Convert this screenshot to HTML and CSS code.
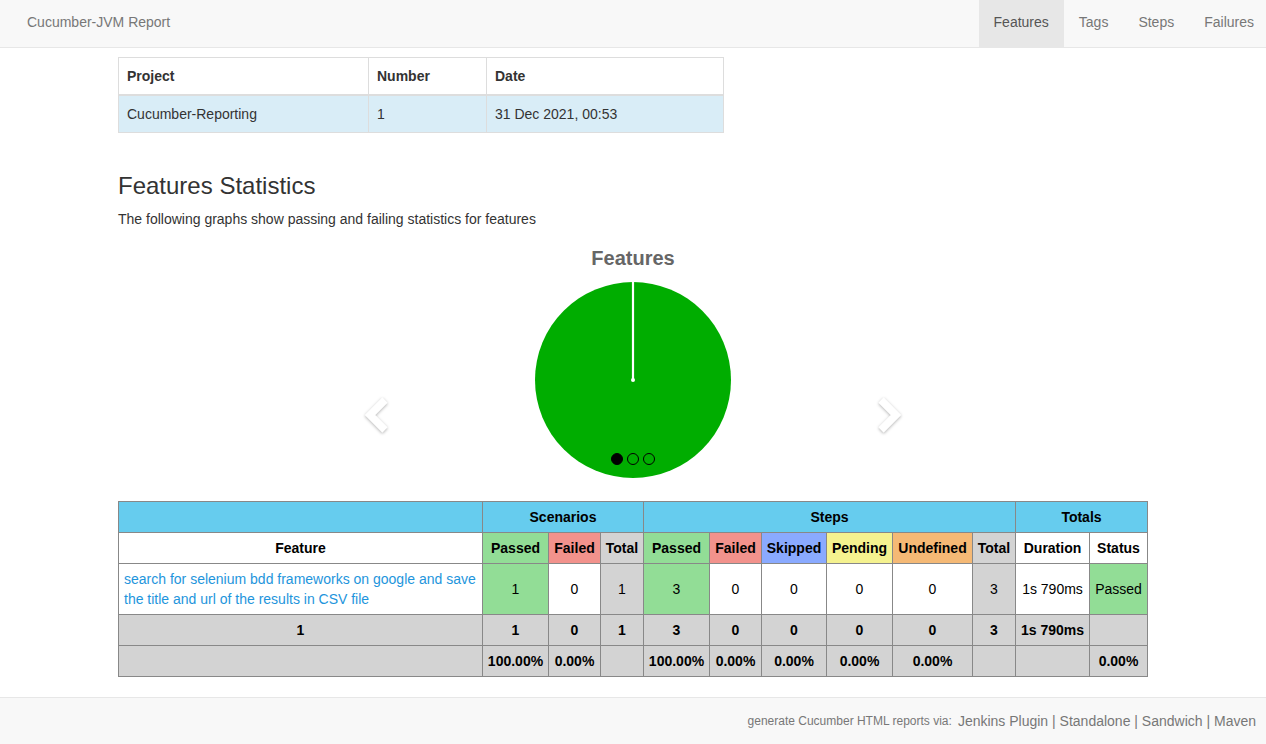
FILE: index.html
```html
<!DOCTYPE html>
<html>
<head>
<meta charset="utf-8">
<title>Cucumber-JVM Report</title>
<link rel="stylesheet" href="styles.css">
</head>
<body>
<nav class="navbar">
  <a class="brand" href="#">Cucumber-JVM Report</a>
  <ul class="nav">
    <li class="active"><a href="#">Features</a></li>
    <li><a href="#">Tags</a></li>
    <li><a href="#">Steps</a></li>
    <li class="last"><a href="#">Failures</a></li>
  </ul>
</nav>

<main class="container">
  <table class="info">
    <colgroup><col class="c-project"><col class="c-number"><col class="c-date"></colgroup>
    <thead>
      <tr><th>Project</th><th>Number</th><th>Date</th></tr>
    </thead>
    <tbody>
      <tr class="info-row"><td>Cucumber-Reporting</td><td>1</td><td>31 Dec 2021, 00:53</td></tr>
    </tbody>
  </table>

  <h2 class="title">Features Statistics</h2>
  <p class="lead">The following graphs show passing and failing statistics for features</p>

  <section class="carousel">
    <div class="chart-title">Features</div>
    <div class="pie-wrap">
      <svg class="pie" width="198" height="198" viewBox="0 0 198 198">
        <circle cx="99" cy="99" r="98" fill="#00ad00"/>
        <line x1="99" y1="0" x2="99" y2="99" stroke="#ffffff" stroke-width="2.2"/>
        <circle cx="99" cy="99" r="2" fill="#ffffff"/>
      </svg>
      <div class="indicators">
        <span class="dot on"></span><span class="dot"></span><span class="dot"></span>
      </div>
    </div>
    <a class="ctrl left" href="#">
      <svg width="30" height="44" viewBox="0 0 30 44"><polyline points="23,6 8,21 23,36" fill="none" stroke="#ffffff" stroke-width="7.5" stroke-linejoin="miter" stroke-linecap="butt"/></svg>
    </a>
    <a class="ctrl right" href="#">
      <svg width="30" height="44" viewBox="0 0 30 44"><polyline points="7,6 22,21 7,36" fill="none" stroke="#ffffff" stroke-width="7.5" stroke-linejoin="miter" stroke-linecap="butt"/></svg>
    </a>
  </section>

  <table class="stats">
    <colgroup>
      <col class="w364"><col class="w66"><col class="w52"><col class="w43">
      <col class="w66"><col class="w52"><col class="w65"><col class="w66"><col class="w80"><col class="w43">
      <col class="w74"><col class="w58">
    </colgroup>
    <thead>
      <tr class="group">
        <th></th>
        <th colspan="3">Scenarios</th>
        <th colspan="6">Steps</th>
        <th colspan="2">Totals</th>
      </tr>
      <tr class="head">
        <th class="white">Feature</th>
        <th class="passed">Passed</th><th class="failed">Failed</th><th class="total">Total</th>
        <th class="passed">Passed</th><th class="failed">Failed</th><th class="skipped">Skipped</th><th class="pending">Pending</th><th class="undefined">Undefined</th><th class="total">Total</th>
        <th class="white">Duration</th><th class="white">Status</th>
      </tr>
    </thead>
    <tbody>
      <tr class="data">
        <td class="feature"><a href="#">search for selenium bdd frameworks on google and save the title and url of the results in CSV file</a></td>
        <td class="passed">1</td><td>0</td><td class="total">1</td>
        <td class="passed">3</td><td>0</td><td>0</td><td>0</td><td>0</td><td class="total">3</td>
        <td>1s 790ms</td><td class="passed">Passed</td>
      </tr>
    </tbody>
    <tfoot>
      <tr class="sum">
        <td>1</td><td>1</td><td>0</td><td>1</td><td>3</td><td>0</td><td>0</td><td>0</td><td>0</td><td>3</td><td>1s 790ms</td><td></td>
      </tr>
      <tr class="sum">
        <td></td><td>100.00%</td><td>0.00%</td><td></td><td>100.00%</td><td>0.00%</td><td>0.00%</td><td>0.00%</td><td>0.00%</td><td></td><td></td><td>0.00%</td>
      </tr>
    </tfoot>
  </table>
</main>

<footer class="footer">
  <span class="via">generate Cucumber HTML reports via:</span>
  <span class="links"><a href="#">Jenkins Plugin</a> | <a href="#">Standalone</a> | <a href="#">Sandwich</a> | <a href="#">Maven</a></span>
</footer>
</body>
</html>
```

FILE: styles.css
```css
* { box-sizing: border-box; }
html, body { margin: 0; padding: 0; }
body {
  font-family: "Liberation Sans", Arial, Helvetica, sans-serif;
  font-size: 14px;
  line-height: 20px;
  color: #333333;
  background: #ffffff;
  width: 1266px;
  min-height: 744px;
  display: flex;
  flex-direction: column;
}
a { text-decoration: none; }

.navbar {
  height: 48px;
  background: #f8f8f8;
  border-bottom: 1px solid #e7e7e7;
  display: flex;
  align-items: stretch;
  justify-content: space-between;
}
.brand {
  color: #777777;
  font-size: 14px;
  padding-left: 27px;
  display: flex;
  align-items: center;
  padding-bottom: 4px;
}
.nav {
  list-style: none;
  margin: 0;
  padding: 0;
  display: flex;
}
.nav li a {
  display: flex;
  align-items: center;
  height: 47px;
  padding: 0 15px 4px;
  color: #777777;
}
.nav li.active a { background: #e7e7e7; color: #555555; }
.nav li.last a { padding-right: 12px; }

.container {
  width: 1030px;
  margin: 0 auto;
  flex: 1;
  padding-top: 9px;
}

table { border-collapse: collapse; border-spacing: 0; }

.info {
  width: 606px;
  border: 1px solid #dddddd;
}
.info .c-project { width: 250px; }
.info .c-number { width: 118px; }
.info th, .info td {
  text-align: left;
  padding: 8px 8px 8px 8px;
  line-height: 20px;
  border: 1px solid #dddddd;
}
.info th { font-weight: bold; border-bottom: 2px solid #dddddd; color: #333; }
.info-row td { background: #d9edf7; }

.title {
  font-size: 24px;
  font-weight: normal;
  line-height: 26px;
  margin: 40px 0 0;
  color: #333333;
}
.lead {
  margin: 10px 0 0;
  line-height: 20px;
}

.carousel {
  position: relative;
  width: 540px;
  margin: 17px auto 0;
  display: flex;
  flex-direction: column;
  align-items: center;
}
.chart-title {
  font-size: 20px;
  font-weight: bold;
  color: #666666;
  line-height: 24px;
}
.pie-wrap {
  position: relative;
  margin-top: 11px;
  width: 198px;
  height: 198px;
}
.pie { display: block; }
.indicators {
  position: absolute;
  left: 0;
  right: 0;
  top: 172px;
  display: flex;
  justify-content: center;
  gap: 4px;
}
.dot {
  width: 12px;
  height: 12px;
  border-radius: 50%;
  border: 1.5px solid #000000;
  background: transparent;
}
.dot.on { background: #000000; }
.ctrl {
  position: absolute;
  top: 148px;
  display: block;
  filter: drop-shadow(0 1px 1.5px rgba(0,0,0,0.3));
}
.ctrl svg { display: block; }
.ctrl.left { left: -1px; }
.ctrl.right { right: -1px; }

.stats {
  width: 1030px;
  margin-top: 22px;
  border: 1px solid #888888;
  font-size: 14px;
  color: #000000;
}
.stats .w364 { width: 364px; }
.stats .w66 { width: 66px; }
.stats .w52 { width: 52px; }
.stats .w43 { width: 43px; }
.stats .w65 { width: 65px; }
.stats .w80 { width: 80px; }
.stats .w74 { width: 74px; }
.stats .w58 { width: 58px; }
.stats th, .stats td {
  border: 1px solid #888888;
  text-align: center;
  padding: 0 2px;
  white-space: nowrap;
}
.stats th { font-size: 14px; font-weight: bold; height: 31px; }
.stats .group th { background: #66ccee; }
.stats .head th { background: #ffffff; }
.stats .data td { height: 51px; background: #ffffff; }
.stats td.feature {
  text-align: left;
  white-space: normal;
  padding: 0 5px;
  line-height: 20px;
}
.stats td.feature a { color: #1e95dc; }
.stats .passed, .stats .head th.passed, .stats .data td.passed { background: #92dd96; }
.stats .head th.failed { background: #f2928c; }
.stats .head th.skipped { background: #8aaaff; }
.stats .head th.pending { background: #f5f28f; }
.stats .head th.undefined { background: #f5b975; }
.stats .total, .stats .head th.total, .stats .data td.total { background: #d3d3d3; }
.stats .sum td {
  background: #d3d3d3;
  font-weight: bold;
  font-size: 14px;
  height: 31px;
}

.footer {
  margin-top: 20px;
  height: 47px;
  background: #f8f8f8;
  border-top: 1px solid #e7e7e7;
  display: flex;
  justify-content: flex-end;
  align-items: center;
  padding-right: 10px;
  color: #777777;
}
.via { font-size: 12px; margin-right: 6px; }
.links { font-size: 14px; }
.links a { color: #777777; }
```
